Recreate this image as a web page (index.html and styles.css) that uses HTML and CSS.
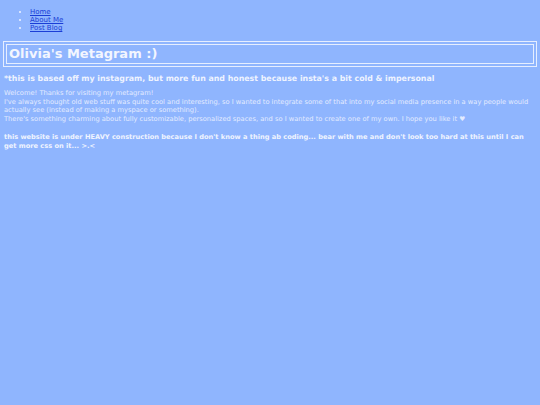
FILE: index.html
```html
<!DOCTYPE html>
<html>
<head>
<meta charset="utf-8">
<title>Olivia's Metagram</title>
<link rel="stylesheet" href="styles.css">
</head>
<body>
<ul class="nav">
  <li><a href="#">Home</a></li>
  <li><a href="#">About Me</a></li>
  <li><a href="#">Post Blog</a></li>
</ul>
<h1 class="title">Olivia's Metagram :)</h1>
<h2 class="sub">*this is based off my instagram, but more fun and honest because insta's a bit cold &amp; impersonal</h2>
<p class="intro">Welcome! Thanks for visiting my metagram!<br>I've always thought old web stuff was quite cool and interesting, so I wanted to integrate some of that into my social media presence in a way people would actually see (instead of making a myspace or something).<br>There's something charming about fully customizable, personalized spaces, and so I wanted to create one of my own. I hope you like it &#9829;</p>
<p class="warn">this website is under HEAVY construction because I don't know a thing ab coding... bear with me and don't look too hard at this until I can get more css on it... &gt;.&lt;</p>
</body>
</html>
```
FILE: styles.css
```css
html, body {
  margin: 0;
  background: #8fb5fe;
}
body {
  padding: 4px 4px;
  font-family: "DejaVu Sans", Verdana, sans-serif;
  color: #e3ebff;
}
.nav {
  margin: 4px 0 0 0;
  padding-left: 26px;
  font-size: 7px;
  line-height: 8px;
  color: #eef3ff;
}
.nav a {
  color: #1b3ed6;
}
.title {
  margin: 9px -1px 0 -1px;
  border: 4px double #e6eeff;
  padding: 0 2px;
  font-size: 13px;
  line-height: 18px;
  color: #f3f6ff;
}
.sub {
  margin: 7px 0 0 0;
  font-size: 7.85px;
  line-height: 10px;
  color: #eef3ff;
}
.intro {
  margin: 5px 0 0 0;
  font-size: 6.7px;
  line-height: 8.5px;
}
.warn {
  margin: 10px 0 0 0;
  font-size: 6.65px;
  line-height: 8.5px;
  font-weight: bold;
  color: #f0f4ff;
}
```
